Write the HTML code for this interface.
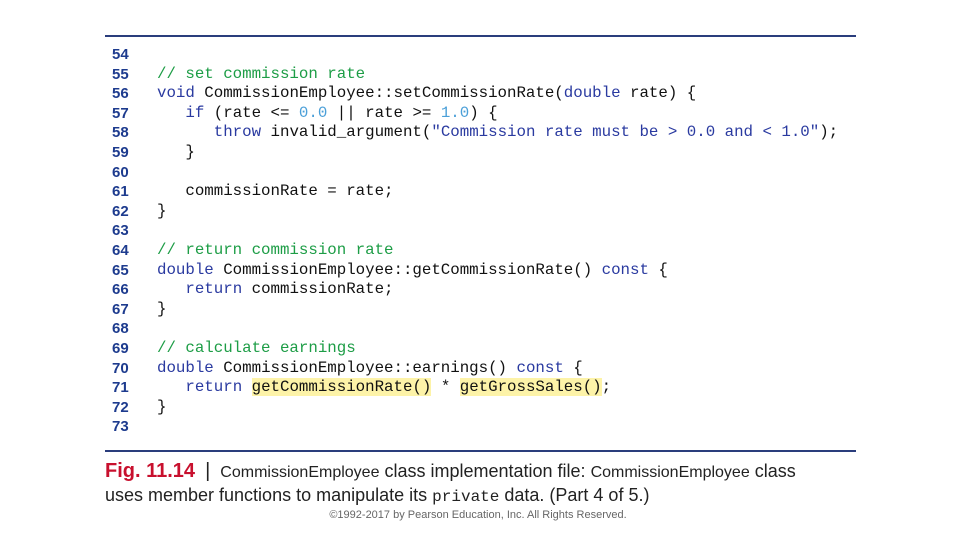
<!DOCTYPE html>
<html><head><style>
body{margin:0;width:960px;height:540px;background:#fff;position:relative;overflow:hidden;font-family:"Liberation Sans",sans-serif}
.rule{position:absolute;left:105px;width:751px;height:2px;background:#2a3d7c}
.ln{position:absolute;left:112px;font:bold 15px "Liberation Sans",sans-serif;color:#1d3b8e;line-height:19.6px}
.code{position:absolute;left:157px;font:15.8px "Liberation Mono",monospace;color:#111;line-height:19.6px;white-space:pre;letter-spacing:-0.02px}
.c{color:#1d9d46}.k{color:#2a3aa0}.n{color:#4a9fd8}.s{color:#2a3aa0}
.h{background:#fdf3a8}
</style></head><body>
<div class="rule" style="top:35px"></div>
<div class="rule" style="top:450px"></div>
<div class="ln" style="top:45px">54<br>55<br>56<br>57<br>58<br>59<br>60<br>61<br>62<br>63<br>64<br>65<br>66<br>67<br>68<br>69<br>70<br>71<br>72<br>73</div>
<div class="code" style="top:45px">
<span class="c">// set commission rate</span>
<span class="k">void</span> CommissionEmployee::setCommissionRate(<span class="k">double</span> rate) {
   <span class="k">if</span> (rate &lt;= <span class="n">0.0</span> || rate &gt;= <span class="n">1.0</span>) {
      <span class="k">throw</span> invalid_argument(<span class="s">"Commission rate must be &gt; 0.0 and &lt; 1.0"</span>);
   }

   commissionRate = rate;
}

<span class="c">// return commission rate</span>
<span class="k">double</span> CommissionEmployee::getCommissionRate() <span class="k">const</span> {
   <span class="k">return</span> commissionRate;
}

<span class="c">// calculate earnings</span>
<span class="k">double</span> CommissionEmployee::earnings() <span class="k">const</span> {
   <span class="k">return</span> <span class="h">getCommissionRate()</span> * <span class="h">getGrossSales()</span>;
}
</div>
<div style="position:absolute;left:105px;top:459px;font-size:18px;color:#222;line-height:24px;white-space:nowrap">
<span style="color:#c8102e;font-weight:bold;font-size:20px">Fig. 11.14</span> &nbsp;<span style="font-size:20px">|</span>&nbsp; <span style="font-size:16px">CommissionEmployee</span> class implementation file: <span style="font-size:16px">CommissionEmployee</span> class<br><span style="position:relative;top:-2px">uses member functions to manipulate its <span style="font-family:'Liberation Mono',monospace;font-size:16px">private</span> data. (Part 4 of 5.)</span>
</div>
<div style="position:absolute;left:0;width:956px;text-align:center;top:509px;font-size:11px;color:#666">©1992-2017 by Pearson Education, Inc. All Rights Reserved.</div>
</body></html>
